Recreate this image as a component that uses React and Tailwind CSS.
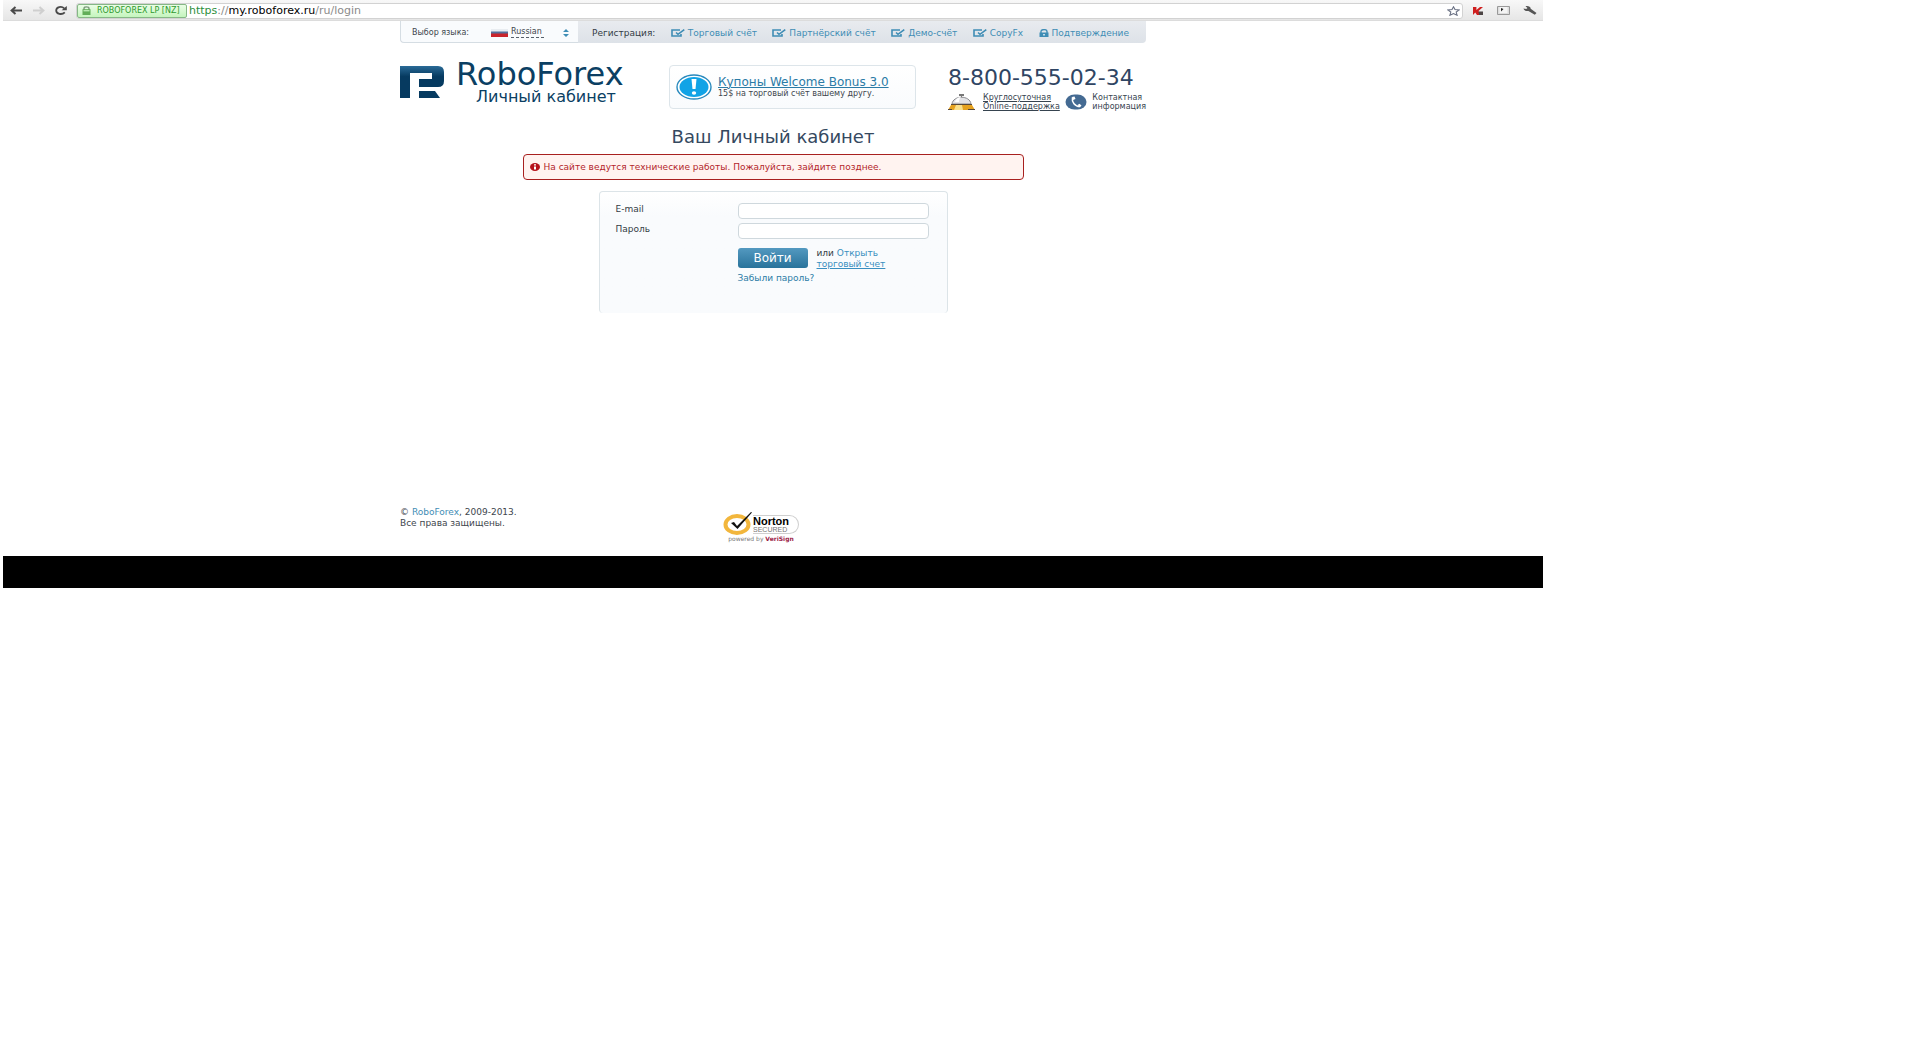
import { useState } from "react";

const navLinks = [
  { label: "Торговый счёт", icon: "edit" },
  { label: "Партнёрский счёт", icon: "edit" },
  { label: "Демо-счёт", icon: "edit" },
  { label: "CopyFx", icon: "edit" },
  { label: "Подтверждение", icon: "lock" },
];

function EditIcon() {
  return (
    <svg width="14" height="8" viewBox="0 0 14 8" fill="none" stroke="#3f8db5">
      <path d="M9 1H1v6h9V5" strokeWidth="1.6" />
      <path d="M5 3.5l2 1.8L13.3.6" strokeWidth="1.6" />
    </svg>
  );
}

function LockIcon() {
  return (
    <svg width="10" height="8" viewBox="0 0 10 8">
      <path d="M2 4V2.4C2 0 8 0 8 2.4V4" fill="none" stroke="#3f8db5" strokeWidth="1.4" />
      <path d="M.5 3.5h9V8h-9z" fill="#3f8db5" />
      <path d="M4.3 5h1.4v1.5H4.3z" fill="#fff" />
    </svg>
  );
}

function BrowserBar() {
  return (
    <div className="flex h-[21px] items-center border-b border-[#dcdcdc] bg-gradient-to-b from-[#f8f8f8] to-[#e6e6e6] pt-px pr-[6px] pl-[7px]">
      <button aria-label="Назад" className="mr-[11px]">
        <svg width="12" height="9" viewBox="0 0 12 9" fill="none" stroke="#4a4a4a" strokeWidth="2">
          <path d="M12 4.5H2M5.5 1L1.6 4.5 5.5 8" />
        </svg>
      </button>
      <button aria-label="Вперёд" className="mr-[10px]">
        <svg width="12" height="9" viewBox="0 0 12 9" fill="none" stroke="#cfcfcf" strokeWidth="2">
          <path d="M0 4.5h10M6.5 1l3.9 3.5L6.5 8" />
        </svg>
      </button>
      <button aria-label="Обновить" className="mr-[9px]">
        <svg width="12" height="9" viewBox="0 0 12 9">
          <path d="M9.2 2.4C6.5-.2 1.2 1 1.2 4.5s5.6 4.8 8.6 1.9" fill="none" stroke="#4a4a4a" strokeWidth="1.8" />
          <path d="M11.8 0v4.2H6.6z" fill="#4a4a4a" />
        </svg>
      </button>
      <div className="flex h-4 min-w-0 flex-1 items-center rounded-[3px] border border-[#d2d2d2] bg-white pr-[2px]">
        <div className="flex h-[14px] w-[110px] items-center gap-[6px] rounded-[2px] border border-[#86b886] bg-gradient-to-b from-[#eafde6] to-[#c4f5bd] pl-[4px]">
          <svg width="9" height="9" viewBox="0 0 9 9" className="shrink-0">
            <path d="M2 4V2.4C2 .3 7 .3 7 2.4V4" fill="none" stroke="#7c987c" strokeWidth="1.4" />
            <path d="M.5 3.2h8V9h-8z" fill="#62ae58" />
            <path d="M1.5 4h6v1.4h-6z" fill="#b9e8b0" />
          </svg>
          <span className="text-[8px] leading-3 whitespace-nowrap text-[#2f9a2f]">ROBOFOREX LP [NZ]</span>
        </div>
        <p className="ml-[2px] text-[11px] leading-3 whitespace-nowrap text-[#8b8b8b]">
          <span className="text-[#2c8f3c]">https</span>://
          <span className="text-black">my.roboforex.ru</span>/ru/login
        </p>
        <input aria-label="Адрес" className="h-3 min-w-0 flex-1 bg-transparent text-[11px] outline-none" />
        <button aria-label="Добавить в закладки">
          <svg width="13" height="10" viewBox="0 0 13 10" fill="#fff" stroke="#697083" strokeWidth="1.1">
            <path d="M6.5.8l1.5 2.8 4.2.4-3 2.1.9 3.2-3.6-1.7-3.6 1.7.9-3.2-3-2.1 4.2-.4z" />
          </svg>
        </button>
      </div>
      <button aria-label="Kaspersky" className="ml-[10px]">
        <svg width="10" height="8" viewBox="0 0 10 8">
          <path d="M0 0h3.4v3L7 0h3L5.5 4 8 8H4L2.2 5.5 0 8z" fill="#cf1f1f" />
          <path d="M5.5 4.5H10V8H6z" fill="#4d4545" />
        </svg>
      </button>
      <button aria-label="Клавиатура" className="ml-[14px]">
        <svg width="13" height="9" viewBox="0 0 13 9">
          <path d="M.5.5h12v8H.5z" fill="#ddd" stroke="#999" />
          <path d="M2.5 1h8v6h-8z" fill="#f5f5f5" />
          <path d="M4 2v3.5L6.5 3z" fill="#222" />
        </svg>
      </button>
      <button aria-label="Настройки" className="ml-[13px]">
        <svg width="14" height="9" viewBox="0 0 14 9">
          <path d="M.5 2.5L3.2 3 4.5 2 2.5.2C5-.3 7.8.5 7.7 2.8L13.5 7l-1.7 1.8L5.4 4.9C3 5.4.8 4.4.5 2.5z" fill="#555" />
        </svg>
      </button>
    </div>
  );
}

function TopNav() {
  return (
    <div className="flex h-[22px] overflow-hidden rounded-b-[4px] bg-gradient-to-b from-[#e8ebef] to-[#dde2e8] text-[9px] leading-3">
      <div className="flex w-[178px] items-center rounded-bl-[4px] border-b border-l border-[#d5dde3] bg-[#f9fbfd] pt-[2px] pl-[11px] text-[8px]">
        <label htmlFor="lang" className="w-[79px] text-[#40464d]">
          Выбор языка:
        </label>
        <svg width="17" height="8" viewBox="0 0 17 8">
          <path d="M0 0h17v3H0z" fill="#e9edf1" />
          <path d="M0 2.5h17V5H0z" fill="#536e9b" />
          <path d="M0 4.5h17V8H0z" fill="#c9242c" />
        </svg>
        <select
          id="lang"
          className="ml-[3px] h-[11px] w-[33px] appearance-none border-b border-dashed border-[#56606b] bg-transparent leading-[10px] text-[#40464d]"
        >
          <option>Russian</option>
        </select>
        <svg width="6" height="8" viewBox="0 0 6 8" className="ml-[19px]" fill="#3f8db5">
          <path d="M0 3l3-3 3 3zM0 5l3 3 3-3z" />
        </svg>
      </div>
      <nav className="flex flex-1 items-center justify-between pt-[2px] pr-[17px] pl-[14px] whitespace-nowrap">
        <span className="text-[#333b44]">Регистрация:</span>
        {navLinks.map((link) => (
          <a key={link.label} href="#" className="flex items-center gap-[3px] text-[#3f8db5]">
            {link.icon === "lock" ? <LockIcon /> : <EditIcon />}
            {link.label}
          </a>
        ))}
      </nav>
    </div>
  );
}

function Header() {
  return (
    <header className="mt-[22px] flex items-start">
      <a href="#" className="flex w-[269px] shrink-0 items-start text-[#0b3f63]">
        <svg width="44" height="33" viewBox="0 0 44 33" className="shrink-0">
          <defs>
            <linearGradient id="mark" x1="0" y1="0" x2="0" y2="33" gradientUnits="userSpaceOnUse">
              <stop offset="0" stopColor="#2d6f9c" />
              <stop offset="0.35" stopColor="#063a60" />
              <stop offset="1" stopColor="#063a60" />
            </linearGradient>
          </defs>
          <path fill="url(#mark)" d="M0 1h38q6 0 6 6v9q0 6-6 6H19v-8h13V8H10v25H0z" />
          <path fill="url(#mark)" d="M19 26h16l5 7H19z" />
        </svg>
        <span className="ml-[12px] flex flex-col items-start">
          <span className="text-[32px] leading-[18px]">RoboForex</span>
          <span className="ml-5 text-[16px] leading-7">Личный кабинет</span>
        </span>
      </a>

      <div className="flex h-[44px] w-[247px] items-center rounded-[4px] border border-[#dde5ea] bg-gradient-to-b from-white to-[#f9fbfd] pl-[6px]">
        <svg width="36" height="26" viewBox="0 0 36 26" className="shrink-0">
          <ellipse cx="18" cy="13" rx="17" ry="12" fill="#fff" stroke="#2889bd" strokeWidth="1.4" />
          <ellipse cx="18" cy="13" rx="14.5" ry="10" fill="#11a3e6" />
          <path d="M15.5 5h5l-1 10h-3z" fill="#fff" />
          <ellipse cx="18" cy="19" rx="2.2" ry="1.7" fill="#fff" />
        </svg>
        <div className="ml-[6px] pt-px whitespace-nowrap">
          <a href="#" className="block text-[12px] leading-3 text-[#2b7ba6] underline">
            Купоны Welcome Bonus 3.0
          </a>
          <p className="text-[8px] leading-3 text-[#40464d]">15$ на торговый счёт вашему другу.</p>
        </div>
      </div>

      <div className="ml-auto w-[198px] whitespace-nowrap">
        <p className="pt-px text-[22px] leading-6 text-[#2f4563]">8-800-555-02-34</p>
        <div className="mt-[3px] flex items-center text-[8px] leading-[9px] text-[#36434f]">
          <svg width="27" height="16" viewBox="0 0 27 16" className="shrink-0">
            <path d="M11 0h5v2h-5zM13 2h1v2h-1z" fill="#777" />
            <path d="M4 10c1-9 18-9 19 0z" fill="#e3e3e6" stroke="#8a8a8e" />
            <path d="M7 8c1-4 4-5 6-5-2 2-2 3-2 5z" fill="#fff" />
            <path d="M3 11h21l3 5H0z" fill="#e6a21f" />
            <path d="M8 11h6l1 5H6z" fill="#fbe08a" />
            <path d="M3 10h21v1H3zM0 15h4v1H0zM20 15h7v1h-7z" fill="#5b4a38" />
          </svg>
          <a href="#" className="ml-[8px] w-[85px] underline">
            Круглосуточная
            <br />
            Online-поддержка
          </a>
          <svg width="22" height="16" viewBox="0 0 22 16" className="shrink-0">
            <rect x=".5" y=".5" width="21" height="15" rx="9" ry="7.5" fill="#446a92" />
            <path
              d="M7.5 3.5C6.500 8 10 12.500 15 12.500"
              fill="none"
              stroke="#fff"
              strokeWidth="1.600"
            />
            <path d="M7 3l2.500-.5 1 2.500-2.500 1zM12.500 11l2-1.200 2 1.700-1.500 1.700z" fill="#fff" />
          </svg>
          <a href="#" className="ml-[5px]">
            Контактная
            <br />
            информация
          </a>
        </div>
      </div>
    </header>
  );
}

function LoginForm() {
  const [email, setEmail] = useState("");
  const [password, setPassword] = useState("");

  return (
    <form className="mx-auto mt-[11px] grid h-[122px] max-w-[349px] grid-cols-[122px_191px] content-start gap-y-1 rounded-[4px] border border-b-0 border-[#dce4e8] bg-gradient-to-b from-white to-[#f9fbfd] to-20% pt-[11px] pl-4 text-[9px] leading-3 text-[#333b44]">
      <label htmlFor="email">E-mail</label>
      <input
        id="email"
        type="email"
        value={email}
        onChange={(e) => setEmail(e.target.value)}
        className="h-4 rounded-[4px] border border-[#cfd8dd] bg-white px-1"
      />
      <label htmlFor="password">Пароль</label>
      <input
        id="password"
        type="password"
        value={password}
        onChange={(e) => setPassword(e.target.value)}
        className="h-4 rounded-[4px] border border-[#cfd8dd] bg-white px-1"
      />
      <div className="col-start-2 mt-[5px] flex">
        <button
          type="button"
          className="h-5 w-[70px] rounded-[3px] bg-gradient-to-b from-[#5399c0] to-[#28739b] text-[12px] leading-4 text-white"
        >
          Войти
        </button>
        <p className="ml-[9px] text-[9px] leading-[11px]">
          или{" "}
          <a href="#" className="text-[#3a8fc0]">
            Открыть
            <br />
            <span className="underline">торговый счет</span>
          </a>
        </p>
      </div>
      <a href="#" className="col-start-2 -mt-[2px] text-[#2b7ba6]">
        Забыли пароль?
      </a>
    </form>
  );
}

function NortonSeal() {
  return (
    <div className="flex w-[76px] flex-col items-center">
      <div className="flex h-[24px] w-full items-center">
        <svg width="30" height="24" viewBox="0 0 30 24" className="shrink-0">
          <ellipse cx="14" cy="13.5" rx="11.5" ry="8.5" fill="#fff" stroke="#f2b63c" strokeWidth="4" />
          <path d="M8 12l3-1 3 4L28 1l1 .5L14.5 18z" fill="#111" />
        </svg>
        <div className="mt-[2px] h-[19px] flex-1 rounded-r-full border border-l-0 border-[#cfcfcf] font-['Liberation_Sans',sans-serif]">
          <p className="text-[11px] leading-[10px] font-bold text-black">Norton</p>
          <p className="text-[7px] leading-[7px] text-[#777]">SECURED</p>
        </div>
      </div>
      <p className="text-[6px] leading-[8px] whitespace-nowrap text-[#777]">
        powered by <span className="font-bold text-[#9b1c47]">VeriSign</span>
      </p>
    </div>
  );
}

function App() {
  return (
    <div className="min-h-screen bg-white pr-[377px] pl-[3px] font-['DejaVu_Sans',sans-serif]">
      <BrowserBar />
      <div className="mx-auto max-w-[746px]">
        <TopNav />
        <Header />

        {/* Login */}
        <main>
          <h1 className="mt-[16px] text-center text-[18px] leading-5 text-[#35495f]">Ваш Личный кабинет</h1>
          <div
            role="alert"
            className="mx-auto mt-[7px] flex h-[26px] max-w-[501px] items-center rounded-[4px] border border-[#a8201f] bg-[#fff3f0] pl-[6px] text-[9px] leading-3 text-[#b31f2b]"
          >
            <svg width="10" height="8" viewBox="0 0 10 8" className="mr-[4px] shrink-0">
              <ellipse cx="5" cy="4" rx="5" ry="4" fill="#b5121b" />
              <path d="M4 1.3h2v1.3H4zM4 3.4h2v3.1H4z" fill="#fff" />
            </svg>
            На сайте ведутся технические работы. Пожалуйста, зайдите позднее.
          </div>
          <LoginForm />
        </main>

        {/* Footer */}
        <footer className="mt-[194px] flex h-[49px] items-start text-[9px] leading-[11px] text-[#40464d]">
          <p className="w-[323px]">
            ©{" "}
            <a href="#" className="text-[#3f8db5]">
              RoboForex
            </a>
            , 2009-2013.
            <br />
            Все права защищены.
          </p>
          <div className="mt-[4px]">
            <NortonSeal />
          </div>
        </footer>
      </div>
      <div className="h-8 bg-black" />
    </div>
  );
}

export default App;
